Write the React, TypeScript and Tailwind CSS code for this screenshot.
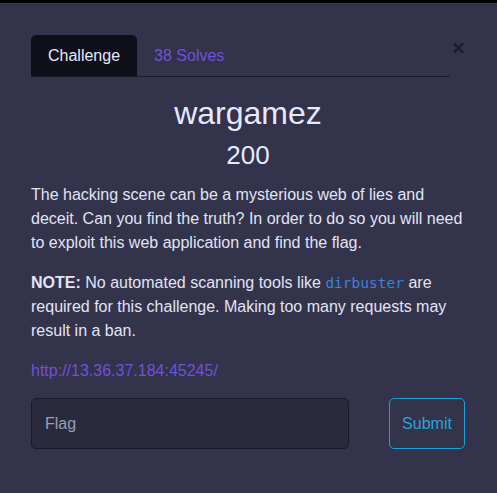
import React from "react";

export default function App() {
  return (
    <div className="min-h-screen w-full bg-[#33334b]" style={{ fontFamily: '"Liberation Sans", Arial, sans-serif' }}>
      <div className="h-[3px] bg-black" />
      <div className="pl-[31px] pr-[32px] pt-[32px]">
        <div className="flex items-start">
          <div className="flex flex-1 border-b border-[#1c1c2b]">
            <div className="h-[41px] rounded-t-[5px] bg-[#0f0f1a] px-[17px] text-[16px] leading-[41px] text-[#e6e8ff]">
              Challenge
            </div>
            <div className="h-[41px] px-[17px] text-[16px] leading-[41px] text-[#6f52d9]">38 Solves</div>
          </div>
          <div className="flex w-[15px] justify-end pt-[7px]">
            <svg width="13" height="12" viewBox="0 0 13 12">
              <path d="M2 1.5 L11 10.5 M11 1.5 L2 10.5" stroke="#1d1d2c" strokeWidth="2.6" strokeLinecap="butt" />
            </svg>
          </div>
        </div>

        <h1 className="mt-[17px] text-center text-[32px] leading-[38px] text-[#e6e8ff]">wargamez</h1>
        <div className="mt-[8px] text-center text-[26px] leading-[31px] text-[#e6e8ff]">200</div>

        <p className="mt-[12px] text-[16px] leading-[24px] text-[#e2e3f5]">
          The hacking scene can be a mysterious web of lies and deceit. Can you find the truth? In order to do so you
          will need to exploit this web application and find the flag.
        </p>
        <p className="mt-[16px] text-[16px] leading-[24px] text-[#e2e3f5]">
          <strong className="font-bold">NOTE:</strong> No automated scanning tools like{" "}
          <code
            className="text-[14.5px] leading-none text-[#3b82e0]"
            style={{ fontFamily: '"DejaVu Sans Mono", monospace' }}
          >
            dirbuster
          </code>{" "}
          are required for this challenge. Making too many requests may result in a ban.
        </p>
        <p className="mt-[16px] text-[16px] leading-[24px] text-[#6f52d9]">http://13.36.37.184:45245/</p>

        <div className="mt-[15px] flex items-center justify-between">
          <div className="flex h-[51px] w-[318px] items-center rounded-[5px] border border-[#1a1a28] bg-[#2a2a3f] pl-[13px] text-[16px] text-[#9b9cb8]">
            Flag
          </div>
          <div className="flex h-[51px] w-[76px] items-center justify-center rounded-[5px] border border-[#1aa0e0] text-[16px] text-[#2aa3dd]">
            Submit
          </div>
        </div>
      </div>
    </div>
  );
}
